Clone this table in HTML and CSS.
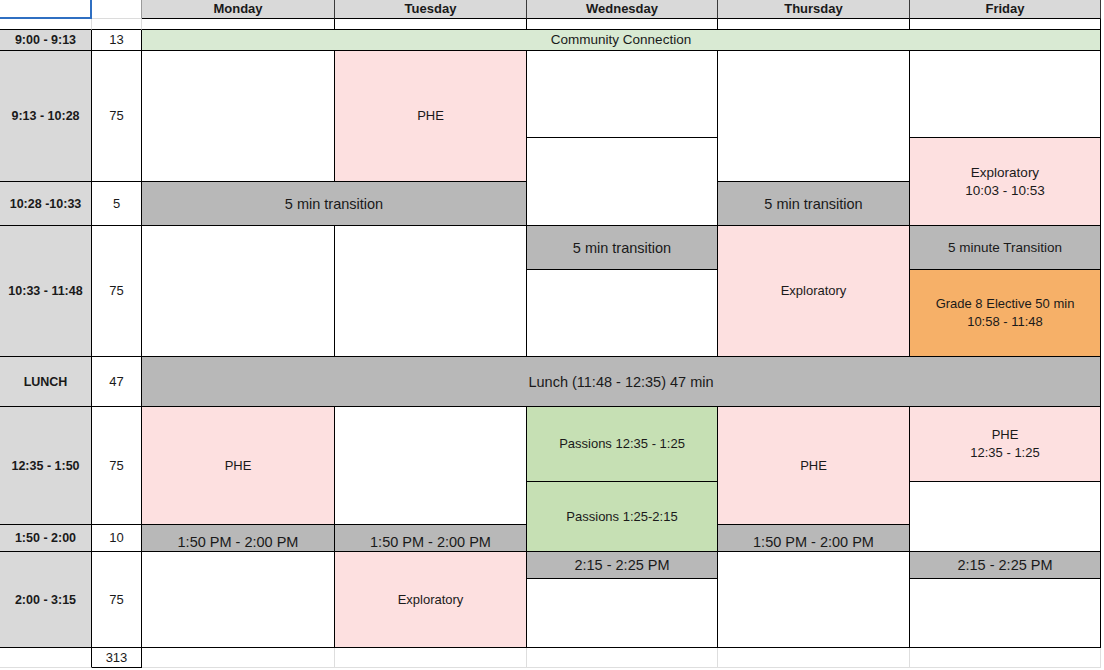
FILE: index.html
```html
<!DOCTYPE html>
<html lang="en">
<head>
<meta charset="utf-8">
<title>Schedule</title>
<link rel="stylesheet" href="styles.css">
</head>
<body>
<div class="sheet">
  <!-- header -->
  <div class="c sel k1 r1"></div>
  <div class="c blank k2 r1"></div>
  <div class="c hd k3 r1">Monday</div>
  <div class="c hd k4 r1">Tuesday</div>
  <div class="c hd k5 r1">Wednesday</div>
  <div class="c hd k6 r1">Thursday</div>
  <div class="c hd k7 r1">Friday</div>

  <div class="c blank2 k1 r2"></div>
  <div class="c blank2 k2 r2"></div>
  <div class="c k3 r2"></div>
  <div class="c k4 r2"></div>
  <div class="c k5 r2"></div>
  <div class="c k6 r2"></div>
  <div class="c k7 r2"></div>

  <!-- time column -->
  <div class="c t k1 r3">9:00 - 9:13</div>
  <div class="c t k1 r4-6">9:13 - 10:28</div>
  <div class="c t k1 r6">10:28 -10:33</div>
  <div class="c t k1 r7-9">10:33 - 11:48</div>
  <div class="c t k1 r9">LUNCH</div>
  <div class="c t k1 r10-12">12:35 - 1:50</div>
  <div class="c t k1 r12">1:50 - 2:00</div>
  <div class="c t k1 r13-15">2:00 - 3:15</div>
  <div class="c foot k1 r15"></div>

  <!-- minutes column -->
  <div class="c n k2 r3">13</div>
  <div class="c n k2 r4-6">75</div>
  <div class="c n k2 r6">5</div>
  <div class="c n k2 r7-9">75</div>
  <div class="c n k2 r9">47</div>
  <div class="c n k2 r10-12">75</div>
  <div class="c n k2 r12">10</div>
  <div class="c n k2 r13-15">75</div>
  <div class="c n total k2 r15">313</div>

  <!-- spanning rows -->
  <div class="c cc k3-8 r3">Community Connection</div>
  <div class="c gr big k3-8 r9">Lunch (11:48 - 12:35) 47 min</div>

  <!-- Monday -->
  <div class="c k3 r4-6"></div>
  <div class="c gr big k3-5 r6">5 min transition</div>
  <div class="c k3 r7-9"></div>
  <div class="c pk k3 r10-12">PHE</div>
  <div class="c gr big low k3 r12">1:50 PM - 2:00 PM</div>
  <div class="c k3 r13-15"></div>

  <!-- Tuesday -->
  <div class="c pk k4 r4-6">PHE</div>
  <div class="c k4 r7-9"></div>
  <div class="c k4 r10-12"></div>
  <div class="c gr big low k4 r12">1:50 PM - 2:00 PM</div>
  <div class="c pk k4 r13-15">Exploratory</div>

  <!-- Wednesday -->
  <div class="c k5 r4"></div>
  <div class="c k5 r5-7"></div>
  <div class="c gr big k5 r7">5 min transition</div>
  <div class="c k5 r8"></div>
  <div class="c gn k5 r10">Passions 12:35 - 1:25</div>
  <div class="c gn k5 r11-13">Passions 1:25-2:15</div>
  <div class="c gr big k5 r13">2:15 - 2:25 PM</div>
  <div class="c k5 r14"></div>

  <!-- Thursday -->
  <div class="c k6 r4-6"></div>
  <div class="c gr big k6 r6">5 min transition</div>
  <div class="c pk k6 r7-9">Exploratory</div>
  <div class="c pk k6 r10-12">PHE</div>
  <div class="c gr big low k6 r12">1:50 PM - 2:00 PM</div>
  <div class="c k6 r13-15"></div>

  <!-- Friday -->
  <div class="c k7 r4"></div>
  <div class="c pk mid k7 r5-7">Exploratory<br>10:03 - 10:53</div>
  <div class="c gr mid k7 r7">5 minute Transition</div>
  <div class="c or k7 r8">Grade 8 Elective 50 min<br>10:58 - 11:48</div>
  <div class="c pk k7 r10">PHE<br>12:35 - 1:25</div>
  <div class="c k7 r11-13"></div>
  <div class="c gr big k7 r13">2:15 - 2:25 PM</div>
  <div class="c k7 r14"></div>

  <!-- footer row -->
  <div class="c foot k3 r15"></div>
  <div class="c foot k4 r15"></div>
  <div class="c foot k5 r15"></div>
  <div class="c foot k6 r15"></div>
  <div class="c foot k7 r15"></div>
</div>
</body>
</html>
```

FILE: styles.css
```css
* { box-sizing: border-box; }

html, body {
  margin: 0;
  padding: 0;
  background: #ffffff;
}

body {
  width: 1104px;
  height: 670px;
  overflow: hidden;
  font-family: "Liberation Sans", Arial, sans-serif;
  color: #1a1a1a;
}

.sheet {
  display: grid;
  grid-template-columns: 92px 50px 193px 192px 191px 192px 191px 3px;
  grid-template-rows: 19px 11px 21px 87px 44px 44px 44px 87px 50px 75px 43px 27px 27px 69px 20px;
  width: 1104px;
  background: #ffffff;
}

.c {
  display: flex;
  align-items: center;
  justify-content: center;
  text-align: center;
  background: #ffffff;
  border-right: 1px solid #000000;
  border-bottom: 1px solid #000000;
  font-size: 13px;
  line-height: 18px;
  white-space: nowrap;
}

/* cell kinds */
.sel {
  border-right: 2px solid #2f6fc2;
  border-bottom: 2px solid #2f6fc2;
}
.blank {
  border-right: 1px solid #9a9a9a;
  border-bottom: 1px solid #dcdcdc;
}
.blank2 {
  border-right: 1px solid #dcdcdc;
}
.hd {
  background: #d9d9d9;
  font-weight: bold;
  font-size: 13px;
  border-right-color: #3a3a3a;
}
.t {
  background: #d9d9d9;
  font-weight: bold;
  font-size: 12.5px;
}
.n { font-size: 13px; }
.foot {
  border-right: 1px solid #dedede;
  border-bottom: 1px solid #dedede;
}
.k1.foot { border-right-color: #000000; }

.cc { background: #d9ead3; font-size: 13.5px; }
.gr { background: #b8b8b8; }
.big { font-size: 14.5px; }
.mid { font-size: 13.5px; }
.low { align-items: flex-end; }
.pk { background: #fde0e0; }
.gn { background: #c6e0b4; }
.or { background: #f6b068; }

/* columns */
.k1 { grid-column: 1; }
.k2 { grid-column: 2; }
.k3 { grid-column: 3; }
.k4 { grid-column: 4; }
.k5 { grid-column: 5; }
.k6 { grid-column: 6; }
.k7 { grid-column: 7; }
.k3-5 { grid-column: 3 / 5; }
.k3-8 { grid-column: 3 / 8; }

/* rows */
.r1 { grid-row: 1; }
.r2 { grid-row: 2; }
.r3 { grid-row: 3; }
.r4 { grid-row: 4; }
.r5-7 { grid-row: 5 / 7; }
.r4-6 { grid-row: 4 / 6; }
.r6 { grid-row: 6; }
.r7 { grid-row: 7; }
.r7-9 { grid-row: 7 / 9; }
.r8 { grid-row: 8; }
.r9 { grid-row: 9; }
.r10 { grid-row: 10; }
.r10-12 { grid-row: 10 / 12; }
.r11-13 { grid-row: 11 / 13; }
.r12 { grid-row: 12; }
.r13 { grid-row: 13; }
.r13-15 { grid-row: 13 / 15; }
.r14 { grid-row: 14; }
.r15 { grid-row: 15; }
```
